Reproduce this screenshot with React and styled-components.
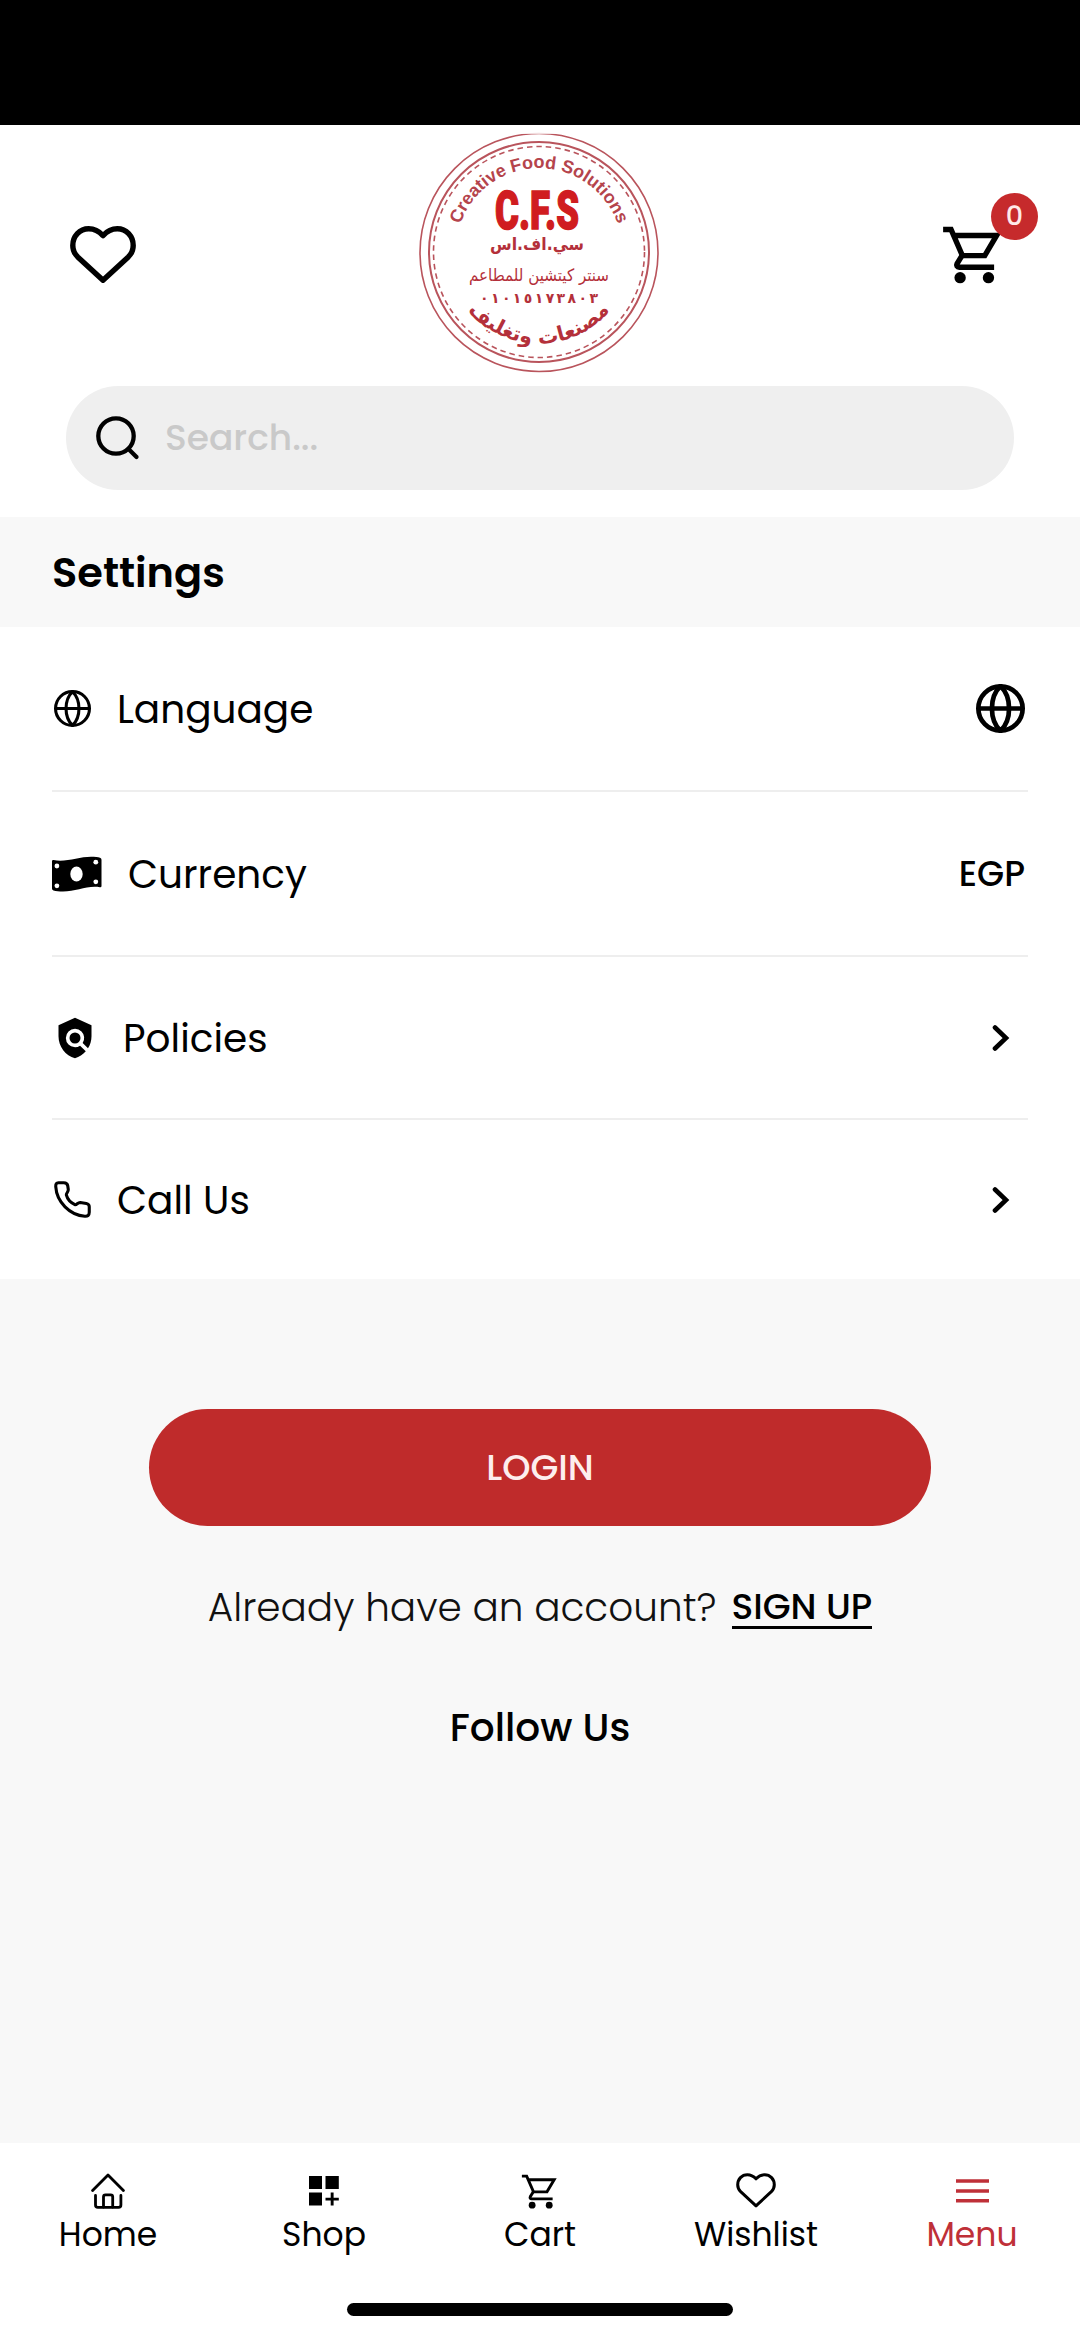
import React from 'react'
import styled, { createGlobalStyle } from 'styled-components'
import { MdPolicy } from 'react-icons/md'

const HeartIcon = ({ width, stroke }) => (
  <svg width={width} viewBox="0 0 66 58" fill="none" stroke="currentColor" strokeWidth={stroke} strokeLinejoin="round">
    <path d="M33 9.600C29.300 5.600 24.500 2.800 18.700 2.800 9.600 2.800 2.800 10.200 2.800 19.400c0 4.600 1.800 8.400 4.900 11.500L33 54.200l25.300-23.300c3.100-3.100 4.900-6.900 4.900-11.500 0-9.200-6.800-16.600-15.900-16.600-5.800 0-10.600 2.800-14.300 6.800z" />
  </svg>
)

const CartIcon = ({ size, stroke }) => (
  <svg width={size} height={size} viewBox="0 0 24 24" fill="none" stroke="currentColor" strokeWidth={stroke}>
    <path d="M1.100 3h2.800l4 9.200h7.900l4.200-7.100H4.900" />
    <path d="M7.700 12.300 6 15.100c-.3.6 0 1.200.8 1.200h12.300" />
    <circle cx="7.1" cy="20" r="2" fill="currentColor" stroke="none" />
    <circle cx="17.1" cy="20" r="2" fill="currentColor" stroke="none" />
  </svg>
)

const GlobeIcon = ({ size, stroke }) => (
  <svg width={size} height={size} viewBox="0 0 24 24" fill="none" stroke="currentColor" strokeWidth={stroke}>
    <circle cx="12" cy="12" r={12 - stroke / 2} />
    <path d="M12 1C8.900 4 7.800 8 7.800 12s1.100 8 4.200 11c3.100-3 4.200-7 4.200-11S15.100 4 12 1zM1 12h22" />
  </svg>
)

const SearchIcon = () => (
  <svg width="44" height="46" viewBox="0 0 44 46" fill="none" stroke="#000" strokeWidth="4.3" strokeLinecap="round">
    <circle cx="20" cy="21" r="17.7" />
    <path d="M32.500 34 40.500 42" />
  </svg>
)

const CashIcon = () => (
  <svg width="50" height="36" viewBox="0 0 50 36">
    <path d="M0 5.500Q0 3.800 1.500 4.100C14 6.500 27 .8 39 .8c4 0 7 .3 9 .9q1.500.4 1.500 2V30q0 1.500-1.500 1.300C36 29 24 35.600 11 35.600c-4 0-7-.6-9.500-1.200Q0 34 0 32.500z" />
    <g fill="#fff">
      <ellipse cx="24.5" cy="18" rx="6.2" ry="7.4" />
      <circle cx="4.9" cy="10" r="2.4" />
      <circle cx="43.8" cy="6.2" r="2.4" />
      <circle cx="4.9" cy="29.8" r="2.4" />
      <circle cx="43.8" cy="25.8" r="2.4" />
    </g>
  </svg>
)

const PhoneIcon = () => (
  <svg width="37" height="37" viewBox="0 0 36 36" fill="none" stroke="currentColor" strokeWidth="3" strokeLinejoin="round">
    <path d="M4.300 1.700H9.500Q13 1.700 13.400 4.800L13.900 8.200C14.200 10.800 11.600 11.600 12 13.600C13 17.500 16.500 21.300 20.300 23C22 23.700 23 20.800 25.500 20.900L31.500 21.800Q34.300 22.400 34.300 25V30.500C34.300 33.500 32.800 34.500 30 34.300C15.500 33.300 2.600 20.500 1.700 5.500Q1.500 1.700 4.300 1.700Z" />
  </svg>
)

const ChevronIcon = () => (
  <svg width="18" height="28" viewBox="0 0 18 28" fill="none" stroke="#000" strokeWidth="4.6" strokeLinecap="round">
    <path d="M3 3.500 14 14 3 24.500" />
  </svg>
)

const HomeIcon = () => (
  <svg width="34" height="36" viewBox="0 0 34 36" fill="none" stroke="currentColor" strokeWidth="2.8" strokeLinecap="round" strokeLinejoin="round">
    <path d="M1.600 17.500 17 2l15.400 15.500M4.500 22.500V32q0 2.400 2.400 2.400h20.600q2.400 0 2.400-2.400v-9.500" />
    <path d="M12.500 34V23.800q0-2 2-2h5.200q2 0 2 2V34" />
  </svg>
)

const ShopIcon = () => (
  <svg width="30" height="30" viewBox="0 0 30 30" fill="currentColor">
    <path d="M0 0h13v13H0zM16.500 0h13.300v13H16.500zM0 16.600h13v13H0zM21.700 16.600h2.900v5.100h5.200v2.900h-5.200v5h-2.900v-5h-5.200v-2.900h5.200z" />
  </svg>
)

const MenuIcon = () => (
  <svg width="33" height="26" viewBox="0 0 33 26" fill="none" stroke="currentColor" strokeWidth="3.6">
    <path d="M0 3h33M0 13h33M0 22.800h33" />
  </svg>
)

const Logo = () => (
  <LogoArt width="260" height="259" viewBox="0 0 260 259">
    <defs>
      <path id="topArc" d="M47.500 126.700a83.500 83.500 0 0 1 167 0" />
      <path id="bottomArc" d="M39 126.700a92 92 0 0 0 184 0" />
    </defs>
    <g fill="none" stroke="#b9545c">
      <circle cx="131" cy="127.5" r="119" strokeWidth="1.6" />
      <circle cx="131" cy="127" r="110" strokeWidth="2" />
      <circle cx="131" cy="127" r="105.5" strokeWidth="1.6" strokeDasharray="5.5 4" />
    </g>
    <path d="M110 6h42v3h-42z" fill="#fff" opacity=".8" />
    <ArcText>
      <textPath href="#topArc" startOffset="50%" textAnchor="middle" textLength="206">
        Creative Food Solutions
      </textPath>
    </ArcText>
    <Initials x="87" y="103.5" textLength="84" lengthAdjust="spacingAndGlyphs">
      C.F.S
    </Initials>
    <Arabic x="129" y="124.5" $size={17} $bold textLength="94" lengthAdjust="spacingAndGlyphs">
      سي.اف.اس
    </Arabic>
    <Arabic x="131" y="156" $size={17} textLength="140" lengthAdjust="spacingAndGlyphs">
      سنتر كيتشين للمطاعم
    </Arabic>
    <Arabic x="131" y="177.5" $size={14} $bold textLength="118">
      ٠١٠١٥١٧٣٨٠٣
    </Arabic>
    <Arabic $size={20.5} $bold>
      <textPath href="#bottomArc" startOffset="50%">
        مصنعات وتغليف
      </textPath>
    </Arabic>
  </LogoArt>
)

const settings = [
  { name: 'Language', icon: <GlobeIcon size={37} stroke={2} />, action: 'language', indent: 2 },
  { name: 'Currency', icon: <CashIcon />, action: 'currency', indent: 0 },
  { name: 'Policies', icon: <MdPolicy size={44} />, indent: 1 },
  { name: 'Call Us', icon: <PhoneIcon />, indent: 2 }
]

const tabs = [
  { name: 'Home', icon: <HomeIcon /> },
  { name: 'Shop', icon: <ShopIcon /> },
  { name: 'Cart', icon: <CartIcon size={41} stroke={1.7} /> },
  { name: 'Wishlist', icon: <HeartIcon width={40} stroke={5} /> },
  { name: 'Menu', icon: <MenuIcon />, active: true }
]

const RowAction = ({ action }) => {
  if (action === 'language') return <GlobeIcon size={49} stroke={2.3} />
  if (action === 'currency') return <Code>EGP</Code>
  return (
    <Arrow>
      <ChevronIcon />
    </Arrow>
  )
}

const App = () => (
  <Page>
    <GlobalStyle />
    <StatusBar />
    <Header>
      <TopRow>
        <HeartIcon width={66} stroke={5.4} />
        <Logo />
        <CartButton>
          <CartIcon size={68} stroke={1.9} />
          <Badge>0</Badge>
        </CartButton>
      </TopRow>
      <SearchBar>
        <SearchIcon />
        <Placeholder>Search...</Placeholder>
      </SearchBar>
    </Header>
    <SectionTitle>Settings</SectionTitle>
    <List>
      {settings.map(({ name, icon, action, indent }) => (
        <Row key={name}>
          <RowIcon $indent={indent}>{icon}</RowIcon>
          <RowName>{name}</RowName>
          <RowAction action={action} />
        </Row>
      ))}
    </List>
    <Account>
      <LoginButton>LOGIN</LoginButton>
      <SignUpLine>
        <span>Already have an account?</span>
        <SignUpLink>SIGN UP</SignUpLink>
      </SignUpLine>
      <FollowUs>Follow Us</FollowUs>
    </Account>
    <TabBar>
      <Tabs>
        {tabs.map(({ name, icon, active }) => (
          <Tab key={name} $active={active}>
            <TabIcon>{icon}</TabIcon>
            {name}
          </Tab>
        ))}
      </Tabs>
      <HomeIndicator />
    </TabBar>
  </Page>
)

export default App

const GlobalStyle = createGlobalStyle`
  body {
    margin: 0;
    background: #fff;
  }
  * {
    box-sizing: border-box;
  }
  svg {
    display: block;
    flex-shrink: 0;
  }
`
const Page = styled.div`
  display: flex;
  flex-direction: column;
  width: 1080px;
  height: 2337px;
  overflow: hidden;
  background: #f8f8f8;
  color: #000;
  font-family: Poppins, Inter, 'Liberation Sans', sans-serif;
`
const StatusBar = styled.div`
  height: 125px;
  background: #000;
`
const Header = styled.header`
  height: 392px;
  background: #fff;
`
const TopRow = styled.div`
  display: flex;
  align-items: center;
  justify-content: space-between;
  height: 261px;
  padding: 0 72px 2px 70px;
`
const LogoArt = styled.svg`
  overflow: hidden;
`
const ArcText = styled.text`
  font-family: 'Liberation Sans', sans-serif;
  font-size: 18px;
  font-weight: 700;
  fill: #b5444c;
`
const Initials = styled.text`
  font-family: Impact, Roboto, sans-serif;
  font-size: 53px;
  font-weight: 900;
  fill: #d01c20;
  stroke: #d01c20;
  stroke-width: 1.5px;
`
const Arabic = styled.text`
  direction: rtl;
  text-anchor: middle;
  font-family: 'DejaVu Sans', sans-serif;
  font-size: ${p => p.$size}px;
  font-weight: ${p => (p.$bold ? 700 : 400)};
  fill: #b4303a;
`
const CartButton = styled.div`
  position: relative;
`
const Badge = styled.span`
  position: absolute;
  top: -28px;
  right: -30px;
  width: 47px;
  height: 47px;
  border-radius: 50%;
  background: #c62a2c;
  color: #ffe9e9;
  font-size: 27px;
  font-weight: 500;
  line-height: 46px;
  text-align: center;
`
const SearchBar = styled.div`
  display: flex;
  align-items: center;
  gap: 25px;
  height: 104px;
  margin: 0 66px;
  padding-left: 30px;
  border-radius: 52px;
  background: #efefef;
`
const Placeholder = styled.span`
  margin-bottom: 2px;
  color: #c9c9c9;
  font-size: 36px;
  font-weight: 500;
`
const SectionTitle = styled.h2`
  height: 110px;
  margin: 0;
  padding-left: 52px;
  background: #f8f8f8;
  font-size: 41.5px;
  font-weight: 600;
  line-height: 111px;
`
const List = styled.div`
  height: 652px;
  padding: 0 52px;
  background: #fff;
`
const Row = styled.div`
  display: flex;
  align-items: center;
  height: 165px;
  padding-right: 3px;
  border-bottom: 2px solid #eee;

  &:nth-child(3) {
    height: 163px;
  }
  &:last-child {
    height: 159px;
    border: 0;
  }
`
const RowIcon = styled.span`
  margin-left: ${p => p.$indent}px;
`
const RowName = styled.span`
  flex: 1;
  margin: 2px 0 0 26px;
  font-size: 39px;
`
const Code = styled.span`
  font-size: 35px;
  font-weight: 500;
`
const Arrow = styled.span`
  margin-right: 15px;
`
const Account = styled.section`
  display: flex;
  flex: 1;
  flex-direction: column;
  align-items: center;
  padding-top: 130px;
`
const LoginButton = styled.button`
  width: 782px;
  height: 117px;
  border: 0;
  border-radius: 59px;
  background: #bf2b2b;
  color: #fdeeee;
  font: inherit;
  font-size: 36px;
  font-weight: 500;
`
const SignUpLine = styled.div`
  display: flex;
  align-items: center;
  gap: 15px;
  height: 44px;
  margin-top: 59px;
  color: #111;
  font-size: 39px;
  font-weight: 300;
  white-space: nowrap;
`
const SignUpLink = styled.a`
  height: 44px;
  border-bottom: 3px solid #000;
  color: #000;
  font-size: 36px;
  font-weight: 500;
  line-height: 43px;
`
const FollowUs = styled.h3`
  margin: 77px 0 0;
  font-size: 39px;
  font-weight: 500;
  line-height: 44px;
`
const TabBar = styled.nav`
  display: flex;
  flex-direction: column;
  align-items: center;
  justify-content: space-between;
  height: 194px;
  padding: 28px 0 21px;
  background: #fff;
`
const Tabs = styled.div`
  display: grid;
  grid-template-columns: repeat(5, 1fr);
  width: 1080px;
`
const Tab = styled.a`
  display: flex;
  flex-direction: column;
  align-items: center;
  gap: 4px;
  color: ${p => (p.$active ? '#bf3038' : '#000')};
  font-size: 33px;
  line-height: 40px;
`
const TabIcon = styled.span`
  display: flex;
  align-items: center;
  justify-content: center;
  height: 40px;
`
const HomeIndicator = styled.div`
  width: 386px;
  height: 13px;
  border-radius: 7px;
  background: #000;
`
